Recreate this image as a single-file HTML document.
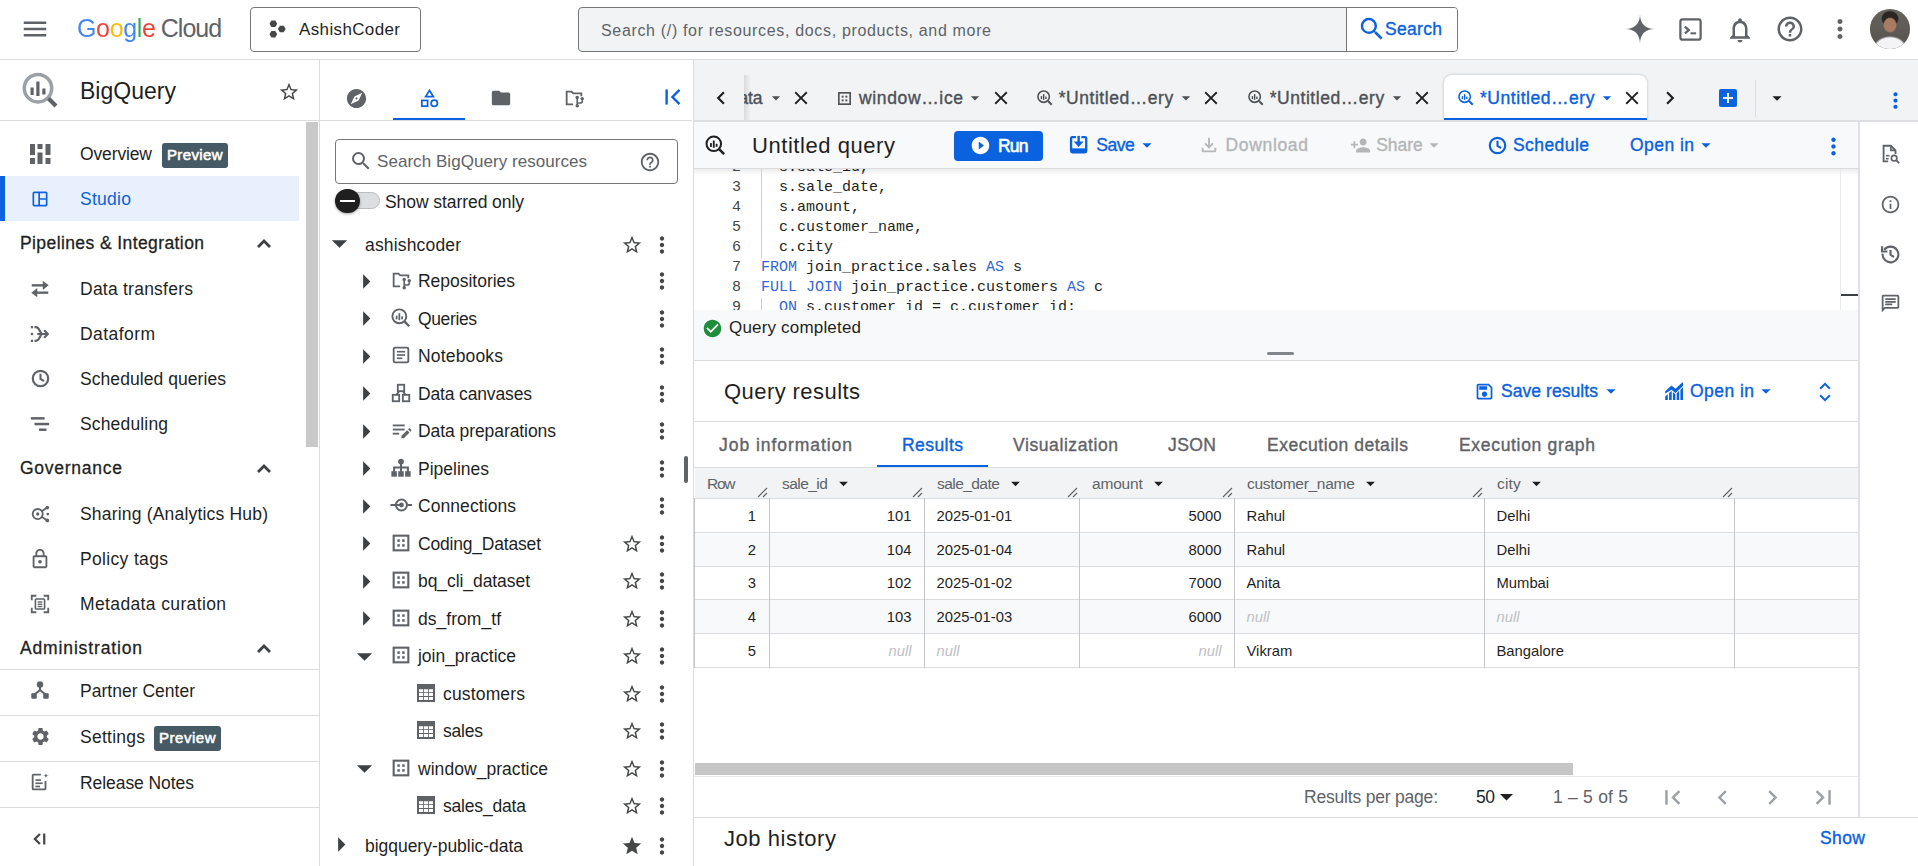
<!DOCTYPE html>
<html lang="en"><head><meta charset="utf-8"><title>BigQuery – Google Cloud console</title>
<style>
html,body{margin:0;padding:0;}
body{width:1918px;height:866px;overflow:hidden;position:relative;background:#fff;font-family:"Liberation Sans",sans-serif;}
.t{position:absolute;white-space:pre;}
.b{position:absolute;}
.i{position:absolute;overflow:visible;}
.c{position:absolute;white-space:pre;font-family:"Liberation Mono",monospace;font-size:15px;line-height:20px;color:#1f1f1f;}
.ln{left:0;width:47px;text-align:right;color:#444746;}
</style></head>
<body>
<div class="b" style="left:0px;top:0px;width:1918px;height:59px;background:#fff;"></div>
<div class="b" style="left:0px;top:59px;width:1918px;height:1px;background:#dadce0;"></div>
<svg class="i" style="left:20.00px;top:14.00px;color:#5f6368;" width="30" height="30" viewBox="0 0 24 24" fill="#5f6368"><path d="M3 18h18v-2H3v2zm0-5h18v-2H3v2zm0-7v2h18V6H3z"/></svg>
<span class="t" style="left:77px;top:13px;font-size:25px;line-height:30px;letter-spacing:-0.35px;font-family:'Liberation Sans',sans-serif;color:transparent;background:linear-gradient(90deg,#4285f4 0.00px 19.10px,#ea4335 19.10px 32.65px,#fbbc04 32.65px 46.20px,#4285f4 46.20px 59.76px,#34a853 59.76px 64.96px,#ea4335 64.96px 78.52px);-webkit-background-clip:text;background-clip:text;padding-right:2px;">Google</span>
<span class="t" style="left:160.70px;top:12.29px;font-size:25px;line-height:32px;color:#5f6368;font-family:'Liberation Sans',sans-serif;letter-spacing:-0.956px;">Cloud</span>
<div class="b" style="left:250px;top:7px;width:171px;height:45px;background:#fff;border:1px solid #747775;border-radius:4px;box-sizing:border-box;"></div>
<svg class="i" style="left:266.00px;top:18.00px;color:#444746;" width="22" height="22" viewBox="0 0 24 24" fill="#444746"><path d="M12.20 6.30L10.10 9.94L5.90 9.94L3.80 6.30L5.90 2.66L10.10 2.66zM21.40 12.00L19.30 15.64L15.10 15.64L13.00 12.00L15.10 8.36L19.30 8.36zM12.20 17.70L10.10 21.34L5.90 21.34L3.80 17.70L5.90 14.06L10.10 14.06z"/></svg>
<span class="t" style="left:299.00px;top:19.20px;font-size:17px;line-height:22px;color:#1f1f1f;font-family:'Liberation Sans',sans-serif;letter-spacing:0.367px;">AshishCoder</span>
<div class="b" style="left:578px;top:7px;width:880px;height:45px;background:#f1f3f4;border:1px solid #747775;border-radius:4px;box-sizing:border-box;"></div>
<div class="b" style="left:1346px;top:8px;width:110px;height:43px;background:#fff;border-left:1px solid #747775;border-radius:0 3px 3px 0;"></div>
<span class="t" style="left:601.00px;top:19.68px;font-size:16px;line-height:21px;color:#5f6368;font-family:'Liberation Sans',sans-serif;letter-spacing:0.664px;">Search (/) for resources, docs, products, and more</span>
<svg class="i" style="left:1356.50px;top:13.50px;color:#0b62de;" width="30" height="30" viewBox="0 0 24 24" fill="#0b62de"><path d="M15.5 14h-.79l-.28-.27A6.471 6.471 0 0 0 16 9.5 6.5 6.5 0 1 0 9.5 16c1.61 0 3.09-.59 4.23-1.57l.27.28v.79l5 4.99L20.49 19l-4.99-5zm-6 0C7.01 14 5 11.99 5 9.5S7.01 5 9.5 5 14 7.01 14 9.5 11.99 14 9.5 14z"/></svg>
<span class="t" style="left:1385.00px;top:17.70px;font-size:17.5px;line-height:23px;color:#0b62de;font-family:'Liberation Sans',sans-serif;-webkit-text-stroke:0.38px #0b62de;letter-spacing:0.311px;">Search</span>
<svg class="i" style="left:1624.00px;top:13.00px;color:#5f6368;" width="32" height="32" viewBox="0 0 24 24" fill="#5f6368"><path d="M12 1C12 8 16 12 23 12 16 12 12 16 12 23 12 16 8 12 1 12 8 12 12 8 12 1z"/></svg>
<svg class="i" style="left:1676.50px;top:15.50px;color:#5f6368;" width="27" height="27" viewBox="0 0 24 24" fill="#5f6368"><rect x="3" y="3" width="18" height="18" rx="2" fill="none" stroke="currentColor" stroke-width="2"/><path d="M7 9.500l3.500 3-3.500 3" stroke="currentColor" stroke-width="2" fill="none"/><rect x="12" y="14.500" width="5" height="1.800"/></svg>
<svg class="i" style="left:1725.00px;top:14.50px;color:#5f6368;" width="30" height="30" viewBox="0 0 24 24" fill="#5f6368"><path d="M12 22c1.1 0 2-.9 2-2h-4c0 1.1.9 2 2 2zm6-6v-5c0-3.07-1.63-5.64-4.5-6.32V4c0-.83-.67-1.5-1.5-1.5s-1.5.67-1.5 1.5v.68C7.64 5.36 6 7.92 6 11v5l-2 2v1h16v-1l-2-2zm-2 1H8v-6c0-2.48 1.51-4.5 4-4.5s4 2.02 4 4.5v6z"/></svg>
<svg class="i" style="left:1775.00px;top:14.00px;color:#5f6368;" width="30" height="30" viewBox="0 0 24 24" fill="#5f6368"><path d="M11 18h2v-2h-2v2zm1-16C6.48 2 2 6.48 2 12s4.48 10 10 10 10-4.48 10-10S17.52 2 12 2zm0 18c-4.41 0-8-3.59-8-8s3.59-8 8-8 8 3.59 8 8-3.59 8-8 8zm0-14c-2.21 0-4 1.79-4 4h2c0-1.1.9-2 2-2s2 .9 2 2c0 2-3 1.75-3 5h2c0-2.25 3-2.5 3-5 0-2.21-1.79-4-4-4z"/></svg>
<svg class="i" style="left:1825.00px;top:14.00px;color:#5f6368;" width="30" height="30" viewBox="0 0 24 24" fill="#5f6368"><path d="M12 8c1.1 0 2-.9 2-2s-.9-2-2-2-2 .9-2 2 .9 2 2 2zm0 2c-1.1 0-2 .9-2 2s.9 2 2 2 2-.9 2-2-.9-2-2-2zm0 6c-1.1 0-2 .9-2 2s.9 2 2 2 2-.9 2-2-.9-2-2-2z"/></svg>
<div class="b" style="left:1870px;top:9px;width:40px;height:40px;border-radius:50%;overflow:hidden;background:#d9d5d0;"><div class="b" style="left:0;top:0;width:40px;height:40px;background:radial-gradient(ellipse 7px 8px at 50% 40%, #a87c63 0 80%, rgba(0,0,0,0) 100%),radial-gradient(ellipse 9px 8px at 50% 24%, #2a2523 0 85%, rgba(0,0,0,0) 100%),radial-gradient(ellipse 17px 13px at 50% 100%, #f4f4f6 0 85%, rgba(0,0,0,0) 100%),linear-gradient(#67645f,#55524e);"></div></div>
<div class="b" style="left:0px;top:60px;width:319px;height:806px;background:#fff;"></div>
<div class="b" style="left:319px;top:60px;width:1px;height:806px;background:#dadce0;"></div>
<svg class="i" style="left:20.00px;top:70.00px;" width="40" height="40" viewBox="0 0 40 40" fill="#5f6368"><circle cx="18" cy="18.200" r="13.700" fill="none" stroke="#9aa0a6" stroke-width="3.500"/><path d="M28.500 28.500L36 36" stroke="#5f6368" stroke-width="4.200" fill="none"/><rect x="10.500" y="17.500" width="3.200" height="7.500" fill="#5f6368"/><rect x="16.300" y="11.500" width="3.200" height="14.500" fill="#5f6368"/><rect x="22.300" y="18.500" width="3.200" height="6" fill="#5f6368"/></svg>
<span class="t" style="left:80.00px;top:76.06px;font-size:23px;line-height:30px;color:#1f1f1f;font-family:'Liberation Sans',sans-serif;letter-spacing:0.018px;">BigQuery</span>
<svg class="i" style="left:278.00px;top:81.00px;color:#444746;" width="22" height="22" viewBox="0 0 24 24" fill="#444746"><path d="M22 9.24l-7.19-.62L12 2 9.19 8.63 2 9.24l5.46 4.73L5.82 21 12 17.27 18.18 21l-1.63-7.03L22 9.24zM12 15.4l-3.76 2.27 1-4.28-3.32-2.88 4.38-.38L12 6.1l1.71 4.04 4.38.38-3.32 2.88 1 4.28L12 15.4z"/></svg>
<div class="b" style="left:0px;top:120px;width:319px;height:1px;background:#dadce0;"></div>
<div class="b" style="left:306px;top:122px;width:12px;height:325px;background:#c9c9c9;"></div>
<svg class="i" style="left:28.00px;top:141.50px;color:#5f6368;" width="24" height="24" viewBox="0 0 24 24" fill="#5f6368"><rect x="2" y="2" width="5" height="11"/><rect x="2" y="16" width="5" height="6"/><rect x="9.500" y="2" width="5" height="5"/><rect x="9.500" y="10.500" width="5" height="11.500"/><rect x="17.500" y="2" width="5" height="11"/><rect x="17.500" y="16" width="5" height="6"/></svg>
<span class="t" style="left:80.00px;top:142.70px;font-size:17.5px;line-height:23px;color:#1f1f1f;font-family:'Liberation Sans',sans-serif;letter-spacing:-0.133px;">Overview</span>
<div class="b" style="left:162px;top:143.0px;width:66px;height:24.5px;background:#455a64;border-radius:3px;"></div>
<span class="t" style="left:167.00px;top:144.77px;font-size:15px;line-height:20px;color:#fff;font-family:'Liberation Sans',sans-serif;-webkit-text-stroke:0.38px #fff;letter-spacing:0.358px;-webkit-text-stroke:0.550px #fff;">Preview</span>
<div class="b" style="left:0px;top:176px;width:299px;height:45px;background:#e8f0fe;"></div>
<div class="b" style="left:0px;top:176px;width:5px;height:45px;background:#0b62de;"></div>
<svg class="i" style="left:30.00px;top:188.50px;color:#0b62de;" width="20" height="20" viewBox="0 0 24 24" fill="#0b62de"><rect x="4" y="4" width="16" height="16" rx="1" fill="none" stroke="currentColor" stroke-width="2"/><path d="M11 4v16M11 12h9" stroke="currentColor" stroke-width="2" fill="none"/></svg>
<span class="t" style="left:80.00px;top:187.70px;font-size:17.5px;line-height:23px;color:#0b62de;font-family:'Liberation Sans',sans-serif;letter-spacing:0.276px;">Studio</span>
<span class="t" style="left:20.00px;top:232.20px;font-size:17.5px;line-height:23px;color:#1f1f1f;font-family:'Liberation Sans',sans-serif;letter-spacing:0.404px;-webkit-text-stroke:0.300px #1f1f1f;">Pipelines &amp; Integration</span>
<svg class="i" style="left:252.00px;top:232.00px;color:#3c4043;" width="24" height="24" viewBox="0 0 24 24" fill="#3c4043"><path d="M6 15l6-6 6 6" stroke="currentColor" stroke-width="2.800" fill="none"/></svg>
<svg class="i" style="left:29.00px;top:277.50px;color:#5f6368;" width="22" height="22" viewBox="0 0 24 24" fill="#5f6368"><path d="M3 8h13" stroke="currentColor" stroke-width="2.600" fill="none"/><path d="M15 3l6.500 5-6.500 5z"/><path d="M21 16H8" stroke="currentColor" stroke-width="2.600" fill="none"/><path d="M9 11l-6.500 5 6.500 5z"/></svg>
<span class="t" style="left:80.00px;top:277.70px;font-size:17.5px;line-height:23px;color:#1f1f1f;font-family:'Liberation Sans',sans-serif;letter-spacing:0.238px;">Data transfers</span>
<svg class="i" style="left:29.00px;top:322.50px;color:#5f6368;" width="22" height="22" viewBox="0 0 24 24" fill="#5f6368"><path d="M9 12h11.500M16.500 8l4 4-4 4" stroke="currentColor" stroke-width="2.400" fill="none"/><path d="M6 4.500h1.500c4.500 0 4 7.500 7.500 7.500M6 19.500h1.500c4.500 0 4-7.500 7.500-7.500" stroke="currentColor" stroke-width="2.400" fill="none"/><rect x="2" y="3.300" width="2.500" height="2.500"/><rect x="2" y="10.750" width="2.500" height="2.500"/><rect x="2" y="18.200" width="2.500" height="2.500"/></svg>
<span class="t" style="left:80.00px;top:322.70px;font-size:17.5px;line-height:23px;color:#1f1f1f;font-family:'Liberation Sans',sans-serif;letter-spacing:0.434px;">Dataform</span>
<svg class="i" style="left:29.50px;top:368.00px;color:#5f6368;" width="21" height="21" viewBox="0 0 24 24" fill="#5f6368"><circle cx="12" cy="12" r="8.800" fill="none" stroke="currentColor" stroke-width="2.500"/><path d="M12 6.500v6l4 2.500" stroke="currentColor" stroke-width="2.400" fill="none"/></svg>
<span class="t" style="left:80.00px;top:367.70px;font-size:17.5px;line-height:23px;color:#1f1f1f;font-family:'Liberation Sans',sans-serif;letter-spacing:0.065px;">Scheduled queries</span>
<svg class="i" style="left:29.00px;top:412.50px;color:#5f6368;" width="22" height="22" viewBox="0 0 24 24" fill="#5f6368"><rect x="2" y="4.500" width="15" height="2.700"/><rect x="6" y="10.700" width="16" height="2.700"/><rect x="11" y="16.900" width="8" height="2.700"/></svg>
<span class="t" style="left:80.00px;top:412.70px;font-size:17.5px;line-height:23px;color:#1f1f1f;font-family:'Liberation Sans',sans-serif;letter-spacing:0.156px;">Scheduling</span>
<span class="t" style="left:20.00px;top:457.20px;font-size:17.5px;line-height:23px;color:#1f1f1f;font-family:'Liberation Sans',sans-serif;letter-spacing:0.741px;-webkit-text-stroke:0.300px #1f1f1f;">Governance</span>
<svg class="i" style="left:252.00px;top:457.00px;color:#3c4043;" width="24" height="24" viewBox="0 0 24 24" fill="#3c4043"><path d="M6 15l6-6 6 6" stroke="currentColor" stroke-width="2.800" fill="none"/></svg>
<svg class="i" style="left:29.00px;top:502.50px;color:#5f6368;" width="22" height="22" viewBox="0 0 24 24" fill="#5f6368"><circle cx="9.500" cy="12" r="5.500" fill="none" stroke="currentColor" stroke-width="2"/><circle cx="9.500" cy="12" r="1.800"/><path d="M14 9l5-3.500M14 15l5 3.500" stroke="currentColor" stroke-width="2" fill="none"/><circle cx="20" cy="5" r="2"/><circle cx="20" cy="19" r="2"/><circle cx="20.500" cy="12" r="1.500"/></svg>
<span class="t" style="left:80.00px;top:502.70px;font-size:17.5px;line-height:23px;color:#1f1f1f;font-family:'Liberation Sans',sans-serif;letter-spacing:0.190px;">Sharing (Analytics Hub)</span>
<svg class="i" style="left:29.00px;top:547.50px;color:#5f6368;" width="22" height="22" viewBox="0 0 24 24" fill="#5f6368"><path d="M18 8h-1V6c0-2.76-2.24-5-5-5S7 3.24 7 6v2H6c-1.1 0-2 .9-2 2v10c0 1.1.9 2 2 2h12c1.1 0 2-.9 2-2V10c0-1.1-.9-2-2-2zM9 6c0-1.66 1.34-3 3-3s3 1.34 3 3v2H9V6zm9 14H6V10h12v10zm-6-3c1.1 0 2-.9 2-2s-.9-2-2-2-2 .9-2 2 .9 2 2 2z"/></svg>
<span class="t" style="left:80.00px;top:547.70px;font-size:17.5px;line-height:23px;color:#1f1f1f;font-family:'Liberation Sans',sans-serif;letter-spacing:0.338px;">Policy tags</span>
<svg class="i" style="left:29.00px;top:592.50px;color:#5f6368;" width="22" height="22" viewBox="0 0 24 24" fill="#5f6368"><path d="M3 8V3h5M16 3h5v5M21 16v5h-5M8 21H3v-5" stroke="currentColor" stroke-width="2" fill="none"/><rect x="7" y="6.500" width="10" height="11" rx="1" fill="none" stroke="currentColor" stroke-width="1.800"/><rect x="9.500" y="9" width="5" height="1.500"/><rect x="9.500" y="11.500" width="5" height="1.500"/><rect x="9.500" y="14" width="5" height="1.500"/></svg>
<span class="t" style="left:80.00px;top:592.70px;font-size:17.5px;line-height:23px;color:#1f1f1f;font-family:'Liberation Sans',sans-serif;letter-spacing:0.370px;">Metadata curation</span>
<span class="t" style="left:20.00px;top:637.20px;font-size:17.5px;line-height:23px;color:#1f1f1f;font-family:'Liberation Sans',sans-serif;letter-spacing:0.855px;-webkit-text-stroke:0.300px #1f1f1f;">Administration</span>
<svg class="i" style="left:252.00px;top:637.00px;color:#3c4043;" width="24" height="24" viewBox="0 0 24 24" fill="#3c4043"><path d="M6 15l6-6 6 6" stroke="currentColor" stroke-width="2.800" fill="none"/></svg>
<div class="b" style="left:0px;top:669px;width:319px;height:1px;background:#dadce0;"></div>
<div class="b" style="left:0px;top:715px;width:319px;height:1px;background:#dadce0;"></div>
<div class="b" style="left:0px;top:761px;width:319px;height:1px;background:#dadce0;"></div>
<div class="b" style="left:0px;top:807px;width:319px;height:1px;background:#dadce0;"></div>
<svg class="i" style="left:29.00px;top:679.30px;color:#5f6368;" width="22" height="22" viewBox="0 0 24 24" fill="#5f6368"><circle cx="12" cy="6" r="3.500"/><rect x="2.500" y="15.500" width="6" height="6" rx="1"/><rect x="15.500" y="15.500" width="6" height="6" rx="1"/><path d="M12 8v4l-6 5M12 12l6 5" stroke="currentColor" stroke-width="2.200" fill="none"/></svg>
<span class="t" style="left:80.00px;top:679.50px;font-size:17.5px;line-height:23px;color:#1f1f1f;font-family:'Liberation Sans',sans-serif;letter-spacing:0.017px;">Partner Center</span>
<svg class="i" style="left:29.50px;top:726.00px;color:#5f6368;" width="21" height="21" viewBox="0 0 24 24" fill="#5f6368"><path d="M19.14 12.94c.04-.3.06-.61.06-.94 0-.32-.02-.64-.07-.94l2.03-1.58c.18-.14.23-.41.12-.61l-1.92-3.32c-.12-.22-.37-.29-.59-.22l-2.39.96c-.5-.38-1.03-.7-1.62-.94l-.36-2.54c-.04-.24-.24-.41-.48-.41h-3.84c-.24 0-.43.17-.47.41l-.36 2.54c-.59.24-1.13.57-1.62.94l-2.39-.96c-.22-.08-.47 0-.59.22L2.74 8.87c-.12.21-.08.47.12.61l2.03 1.58c-.05.3-.09.63-.09.94s.02.64.07.94l-2.03 1.58c-.18.14-.23.41-.12.61l1.92 3.32c.12.22.37.29.59.22l2.39-.96c.5.38 1.03.7 1.62.94l.36 2.54c.05.24.24.41.48.41h3.84c.24 0 .44-.17.47-.41l.36-2.54c.59-.24 1.13-.56 1.62-.94l2.39.96c.22.08.47 0 .59-.22l1.92-3.32c.12-.22.07-.47-.12-.61l-2.01-1.58zM12 15.6c-1.98 0-3.6-1.62-3.6-3.6s1.62-3.6 3.6-3.6 3.6 1.62 3.6 3.6-1.62 3.6-3.6 3.6z"/></svg>
<span class="t" style="left:80.00px;top:725.70px;font-size:17.5px;line-height:23px;color:#1f1f1f;font-family:'Liberation Sans',sans-serif;letter-spacing:0.253px;">Settings</span>
<div class="b" style="left:154px;top:726.0px;width:67px;height:24.5px;background:#455a64;border-radius:3px;"></div>
<span class="t" style="left:159.00px;top:727.77px;font-size:15px;line-height:20px;color:#fff;font-family:'Liberation Sans',sans-serif;-webkit-text-stroke:0.38px #fff;letter-spacing:0.525px;-webkit-text-stroke:0.550px #fff;">Preview</span>
<svg class="i" style="left:29.00px;top:771.30px;color:#5f6368;" width="22" height="22" viewBox="0 0 24 24" fill="#5f6368"><path d="M13 4H5a1 1 0 0 0-1 1v14a1 1 0 0 0 1 1h12a1 1 0 0 0 1-1v-8" stroke="currentColor" stroke-width="2" fill="none"/><rect x="7" y="9" width="6" height="1.800"/><rect x="7" y="12.500" width="8" height="1.800"/><rect x="7" y="16" width="5" height="1.800"/><path d="M18.500 1.500c0 2.500 1 3.500 3.500 3.500-2.500 0-3.500 1-3.500 3.500 0-2.500-1-3.500-3.500-3.500 2.500 0 3.500-1 3.500-3.500z"/></svg>
<span class="t" style="left:80.00px;top:771.50px;font-size:17.5px;line-height:23px;color:#1f1f1f;font-family:'Liberation Sans',sans-serif;letter-spacing:-0.065px;">Release Notes</span>
<svg class="i" style="left:27.50px;top:828.30px;color:#444746;" width="22" height="22" viewBox="0 0 24 24" fill="#444746"><path d="M13 6.500l-5.500 5.500 5.500 5.500" stroke="currentColor" stroke-width="2.500" fill="none"/><rect x="16.500" y="6" width="2.400" height="12"/></svg>
<div class="b" style="left:320px;top:60px;width:372px;height:806px;background:#fff;"></div>
<div class="b" style="left:693px;top:60px;width:1px;height:806px;background:#dadce0;"></div>
<svg class="i" style="left:344.50px;top:86.50px;color:#5f6368;" width="23" height="23" viewBox="0 0 24 24" fill="#5f6368"><path d="M12 10.9c-.61 0-1.1.49-1.1 1.1s.49 1.1 1.1 1.1c.61 0 1.1-.49 1.1-1.1s-.49-1.1-1.1-1.1zM12 2C6.48 2 2 6.48 2 12s4.48 10 10 10 10-4.48 10-10S17.52 2 12 2zm2.19 12.19L6 18l3.81-8.19L18 6l-3.81 8.19z"/></svg>
<svg class="i" style="left:417.50px;top:86.50px;color:#0b62de;" width="23" height="23" viewBox="0 0 24 24" fill="#0b62de"><path d="M12 3.500l4 6.500H8z" fill="none" stroke="currentColor" stroke-width="1.800"/><rect x="4" y="14" width="6" height="6" fill="none" stroke="currentColor" stroke-width="1.800"/><circle cx="17" cy="17" r="3.300" fill="none" stroke="currentColor" stroke-width="1.800"/></svg>
<svg class="i" style="left:490.00px;top:87.00px;color:#5f6368;" width="22" height="22" viewBox="0 0 24 24" fill="#5f6368"><path d="M10 4H4c-1.1 0-1.99.9-1.99 2L2 18c0 1.1.9 2 2 2h16c1.1 0 2-.9 2-2V8c0-1.1-.9-2-2-2h-8l-2-2z"/></svg>
<svg class="i" style="left:563.00px;top:87.00px;color:#5f6368;" width="22" height="22" viewBox="0 0 24 24" fill="#5f6368"><path d="M11 19H4V5h5.2l2 2H20v3" fill="none" stroke="currentColor" stroke-width="2"/><path d="M15.5 11v10M15.5 17.5h3.2c1.3 0 2.3-1 2.3-2.3V14.5" fill="none" stroke="currentColor" stroke-width="1.8"/><circle cx="15.5" cy="11.5" r="1.9"/><circle cx="21" cy="12.8" r="1.9"/><circle cx="15.5" cy="20.5" r="1.9"/></svg>
<svg class="i" style="left:660.00px;top:84.00px;color:#0b62de;" width="26" height="26" viewBox="0 0 24 24" fill="#0b62de"><rect x="5" y="5" width="2.200" height="14"/><path d="M18 5.500L11.500 12l6.500 6.500" stroke="currentColor" stroke-width="2.200" fill="none"/></svg>
<div class="b" style="left:320px;top:120px;width:372px;height:1px;background:#dadce0;"></div>
<div class="b" style="left:393px;top:118px;width:72px;height:2px;background:#0b62de;"></div>
<div class="b" style="left:335px;top:139px;width:343px;height:45px;background:#fff;border:1px solid #747775;border-radius:4px;box-sizing:border-box;"></div>
<svg class="i" style="left:349.00px;top:149.00px;color:#5f6368;" width="24" height="24" viewBox="0 0 24 24" fill="#5f6368"><path d="M15.5 14h-.79l-.28-.27A6.471 6.471 0 0 0 16 9.5 6.5 6.5 0 1 0 9.5 16c1.61 0 3.09-.59 4.23-1.57l.27.28v.79l5 4.99L20.49 19l-4.99-5zm-6 0C7.01 14 5 11.99 5 9.5S7.01 5 9.5 5 14 7.01 14 9.5 11.99 14 9.5 14z"/></svg>
<span class="t" style="left:377.00px;top:151.20px;font-size:17px;line-height:22px;color:#5f6368;font-family:'Liberation Sans',sans-serif;letter-spacing:0.049px;">Search BigQuery resources</span>
<svg class="i" style="left:639.00px;top:151.00px;color:#5f6368;" width="22" height="22" viewBox="0 0 24 24" fill="#5f6368"><path d="M11 18h2v-2h-2v2zm1-16C6.48 2 2 6.48 2 12s4.48 10 10 10 10-4.48 10-10S17.52 2 12 2zm0 18c-4.41 0-8-3.59-8-8s3.59-8 8-8 8 3.59 8 8-3.59 8-8 8zm0-14c-2.21 0-4 1.79-4 4h2c0-1.1.9-2 2-2s2 .9 2 2c0 2-3 1.75-3 5h2c0-2.25 3-2.5 3-5 0-2.21-1.79-4-4-4z"/></svg>
<div class="b" style="left:347px;top:192px;width:33px;height:17px;background:#dddee2;border-radius:9px;border:1px solid #babdc2;box-sizing:border-box;"></div>
<div class="b" style="left:335px;top:188.7px;width:24.6px;height:24.6px;background:#1f1f1f;border-radius:50%;box-shadow:0 1px 3px rgba(0,0,0,.35);"></div>
<div class="b" style="left:339.5px;top:199.7px;width:15px;height:2.6px;background:#fff;"></div>
<span class="t" style="left:385.00px;top:190.70px;font-size:17.5px;line-height:23px;color:#1f1f1f;font-family:'Liberation Sans',sans-serif;letter-spacing:-0.067px;">Show starred only</span>
<svg class="i" style="left:328.30px;top:232.00px;color:#3c4043;" width="23" height="23" viewBox="0 0 24 24" fill="#3c4043"><path d="M4 8.500h16L12 16.500z"/></svg>
<span class="t" style="left:365.00px;top:234.20px;font-size:17.5px;line-height:23px;color:#1f1f1f;font-family:'Liberation Sans',sans-serif;letter-spacing:0.164px;">ashishcoder</span>
<svg class="i" style="left:621.00px;top:234.00px;color:#444746;" width="22" height="22" viewBox="0 0 24 24" fill="#444746"><path d="M22 9.24l-7.19-.62L12 2 9.19 8.63 2 9.24l5.46 4.73L5.82 21 12 17.27 18.18 21l-1.63-7.03L22 9.24zM12 15.4l-3.76 2.27 1-4.28-3.32-2.88 4.38-.38L12 6.1l1.71 4.04 4.38.38-3.32 2.88 1 4.28L12 15.4z"/></svg>
<svg class="i" style="left:649.00px;top:232.30px;color:#444746;" width="26" height="26" viewBox="0 0 24 24" fill="#444746"><path d="M12 8c1.1 0 2-.9 2-2s-.9-2-2-2-2 .9-2 2 .9 2 2 2zm0 2c-1.1 0-2 .9-2 2s.9 2 2 2 2-.9 2-2-.9-2-2-2zm0 6c-1.1 0-2 .9-2 2s.9 2 2 2 2-.9 2-2-.9-2-2-2z"/></svg>
<svg class="i" style="left:355.00px;top:269.80px;color:#3c4043;" width="23" height="23" viewBox="0 0 24 24" fill="#3c4043"><path d="M8.500 4.500L16 12l-7.500 7.500z"/></svg>
<svg class="i" style="left:390.00px;top:269.00px;color:#5f6368;" width="22" height="22" viewBox="0 0 24 24" fill="#5f6368"><path d="M11 19H4V5h5.2l2 2H20v3" fill="none" stroke="currentColor" stroke-width="2"/><path d="M15.5 11v10M15.5 17.5h3.2c1.3 0 2.3-1 2.3-2.3V14.5" fill="none" stroke="currentColor" stroke-width="1.8"/><circle cx="15.5" cy="11.5" r="1.9"/><circle cx="21" cy="12.8" r="1.9"/><circle cx="15.5" cy="20.5" r="1.9"/></svg>
<span class="t" style="left:418.00px;top:270.20px;font-size:17.5px;line-height:23px;color:#1f1f1f;font-family:'Liberation Sans',sans-serif;letter-spacing:-0.024px;">Repositories</span>
<svg class="i" style="left:649.00px;top:268.30px;color:#444746;" width="26" height="26" viewBox="0 0 24 24" fill="#444746"><path d="M12 8c1.1 0 2-.9 2-2s-.9-2-2-2-2 .9-2 2 .9 2 2 2zm0 2c-1.1 0-2 .9-2 2s.9 2 2 2 2-.9 2-2-.9-2-2-2zm0 6c-1.1 0-2 .9-2 2s.9 2 2 2 2-.9 2-2-.9-2-2-2z"/></svg>
<svg class="i" style="left:355.00px;top:307.30px;color:#3c4043;" width="23" height="23" viewBox="0 0 24 24" fill="#3c4043"><path d="M8.500 4.500L16 12l-7.500 7.500z"/></svg>
<svg class="i" style="left:390.00px;top:306.50px;color:#5f6368;" width="22" height="22" viewBox="0 0 24 24" fill="#5f6368"><circle cx="10.200" cy="10.200" r="7.600" fill="none" stroke="currentColor" stroke-width="2.100"/><path d="M16 16L21 21" stroke="currentColor" stroke-width="2.600" fill="none"/><rect x="6.300" y="9.500" width="1.900" height="4"/><rect x="9.250" y="6.800" width="1.900" height="7.600"/><rect x="12.200" y="10.200" width="1.900" height="3.200"/></svg>
<span class="t" style="left:418.00px;top:307.70px;font-size:17.5px;line-height:23px;color:#1f1f1f;font-family:'Liberation Sans',sans-serif;letter-spacing:-0.379px;">Queries</span>
<svg class="i" style="left:649.00px;top:305.80px;color:#444746;" width="26" height="26" viewBox="0 0 24 24" fill="#444746"><path d="M12 8c1.1 0 2-.9 2-2s-.9-2-2-2-2 .9-2 2 .9 2 2 2zm0 2c-1.1 0-2 .9-2 2s.9 2 2 2 2-.9 2-2-.9-2-2-2zm0 6c-1.1 0-2 .9-2 2s.9 2 2 2 2-.9 2-2-.9-2-2-2z"/></svg>
<svg class="i" style="left:355.00px;top:344.80px;color:#3c4043;" width="23" height="23" viewBox="0 0 24 24" fill="#3c4043"><path d="M8.500 4.500L16 12l-7.500 7.500z"/></svg>
<svg class="i" style="left:390.00px;top:344.00px;color:#5f6368;" width="22" height="22" viewBox="0 0 24 24" fill="#5f6368"><rect x="4" y="4" width="16" height="16" rx="1.5" fill="none" stroke="currentColor" stroke-width="2"/><rect x="7.5" y="7.5" width="9" height="1.8"/><rect x="7.5" y="11.1" width="9" height="1.8"/><rect x="7.5" y="14.7" width="6" height="1.8"/></svg>
<span class="t" style="left:418.00px;top:345.20px;font-size:17.5px;line-height:23px;color:#1f1f1f;font-family:'Liberation Sans',sans-serif;letter-spacing:0.167px;">Notebooks</span>
<svg class="i" style="left:649.00px;top:343.30px;color:#444746;" width="26" height="26" viewBox="0 0 24 24" fill="#444746"><path d="M12 8c1.1 0 2-.9 2-2s-.9-2-2-2-2 .9-2 2 .9 2 2 2zm0 2c-1.1 0-2 .9-2 2s.9 2 2 2 2-.9 2-2-.9-2-2-2zm0 6c-1.1 0-2 .9-2 2s.9 2 2 2 2-.9 2-2-.9-2-2-2z"/></svg>
<svg class="i" style="left:355.00px;top:382.30px;color:#3c4043;" width="23" height="23" viewBox="0 0 24 24" fill="#3c4043"><path d="M8.500 4.500L16 12l-7.500 7.500z"/></svg>
<svg class="i" style="left:390.00px;top:381.50px;color:#5f6368;" width="22" height="22" viewBox="0 0 24 24" fill="#5f6368"><rect x="8.5" y="3" width="7" height="7" fill="none" stroke="currentColor" stroke-width="2"/><rect x="3" y="14" width="7" height="7" fill="none" stroke="currentColor" stroke-width="2"/><rect x="14" y="14" width="7" height="7" fill="none" stroke="currentColor" stroke-width="2"/><path d="M10 10L7 14M14 10l3 4" stroke="currentColor" stroke-width="2" fill="none"/></svg>
<span class="t" style="left:418.00px;top:382.70px;font-size:17.5px;line-height:23px;color:#1f1f1f;font-family:'Liberation Sans',sans-serif;letter-spacing:-0.146px;">Data canvases</span>
<svg class="i" style="left:649.00px;top:380.80px;color:#444746;" width="26" height="26" viewBox="0 0 24 24" fill="#444746"><path d="M12 8c1.1 0 2-.9 2-2s-.9-2-2-2-2 .9-2 2 .9 2 2 2zm0 2c-1.1 0-2 .9-2 2s.9 2 2 2 2-.9 2-2-.9-2-2-2zm0 6c-1.1 0-2 .9-2 2s.9 2 2 2 2-.9 2-2-.9-2-2-2z"/></svg>
<svg class="i" style="left:355.00px;top:419.80px;color:#3c4043;" width="23" height="23" viewBox="0 0 24 24" fill="#3c4043"><path d="M8.500 4.500L16 12l-7.500 7.500z"/></svg>
<svg class="i" style="left:390.00px;top:419.00px;color:#5f6368;" width="22" height="22" viewBox="0 0 24 24" fill="#5f6368"><rect x="3" y="6" width="13" height="2"/><rect x="3" y="10.5" width="13" height="2"/><rect x="3" y="15" width="7" height="2"/><path d="M12.5 21v-2.6l6.2-6.2 2.6 2.6-6.2 6.2z M19.6 11.3l1-1c.3-.3.8-.3 1.1 0l1.5 1.500c.3.3.3.8 0 1.1l-1 1z"/></svg>
<span class="t" style="left:418.00px;top:420.20px;font-size:17.5px;line-height:23px;color:#1f1f1f;font-family:'Liberation Sans',sans-serif;letter-spacing:-0.069px;">Data preparations</span>
<svg class="i" style="left:649.00px;top:418.30px;color:#444746;" width="26" height="26" viewBox="0 0 24 24" fill="#444746"><path d="M12 8c1.1 0 2-.9 2-2s-.9-2-2-2-2 .9-2 2 .9 2 2 2zm0 2c-1.1 0-2 .9-2 2s.9 2 2 2 2-.9 2-2-.9-2-2-2zm0 6c-1.1 0-2 .9-2 2s.9 2 2 2 2-.9 2-2-.9-2-2-2z"/></svg>
<svg class="i" style="left:355.00px;top:457.30px;color:#3c4043;" width="23" height="23" viewBox="0 0 24 24" fill="#3c4043"><path d="M8.500 4.500L16 12l-7.500 7.500z"/></svg>
<svg class="i" style="left:390.00px;top:456.50px;color:#5f6368;" width="22" height="22" viewBox="0 0 24 24" fill="#5f6368"><circle cx="12" cy="5" r="3.200"/><rect x="1.500" y="15.500" width="6" height="6"/><rect x="9" y="15.500" width="6" height="6"/><rect x="16.500" y="15.500" width="6" height="6"/><path d="M12 7v9M4.500 16v-4.500h15V16" stroke="currentColor" stroke-width="2.200" fill="none"/></svg>
<span class="t" style="left:418.00px;top:457.70px;font-size:17.5px;line-height:23px;color:#1f1f1f;font-family:'Liberation Sans',sans-serif;">Pipelines</span>
<svg class="i" style="left:649.00px;top:455.80px;color:#444746;" width="26" height="26" viewBox="0 0 24 24" fill="#444746"><path d="M12 8c1.1 0 2-.9 2-2s-.9-2-2-2-2 .9-2 2 .9 2 2 2zm0 2c-1.1 0-2 .9-2 2s.9 2 2 2 2-.9 2-2-.9-2-2-2zm0 6c-1.1 0-2 .9-2 2s.9 2 2 2 2-.9 2-2-.9-2-2-2z"/></svg>
<svg class="i" style="left:355.00px;top:494.80px;color:#3c4043;" width="23" height="23" viewBox="0 0 24 24" fill="#3c4043"><path d="M8.500 4.500L16 12l-7.500 7.500z"/></svg>
<svg class="i" style="left:390.00px;top:494.00px;color:#5f6368;" width="22" height="22" viewBox="0 0 24 24" fill="#5f6368"><circle cx="12.500" cy="12" r="6" fill="none" stroke="currentColor" stroke-width="2.200"/><circle cx="12.500" cy="12" r="2.600"/><path d="M0.500 12h11M19 12h5" stroke="currentColor" stroke-width="2.200" fill="none"/></svg>
<span class="t" style="left:418.00px;top:495.20px;font-size:17.5px;line-height:23px;color:#1f1f1f;font-family:'Liberation Sans',sans-serif;letter-spacing:0.072px;">Connections</span>
<svg class="i" style="left:649.00px;top:493.30px;color:#444746;" width="26" height="26" viewBox="0 0 24 24" fill="#444746"><path d="M12 8c1.1 0 2-.9 2-2s-.9-2-2-2-2 .9-2 2 .9 2 2 2zm0 2c-1.1 0-2 .9-2 2s.9 2 2 2 2-.9 2-2-.9-2-2-2zm0 6c-1.1 0-2 .9-2 2s.9 2 2 2 2-.9 2-2-.9-2-2-2z"/></svg>
<svg class="i" style="left:355.00px;top:532.30px;color:#3c4043;" width="23" height="23" viewBox="0 0 24 24" fill="#3c4043"><path d="M8.500 4.500L16 12l-7.500 7.500z"/></svg>
<svg class="i" style="left:390.00px;top:531.50px;color:#5f6368;" width="22" height="22" viewBox="0 0 24 24" fill="#5f6368"><rect x="4" y="4" width="16" height="16" fill="none" stroke="currentColor" stroke-width="2.300"/><rect x="8" y="8" width="2.700" height="2.700"/><rect x="13.300" y="8" width="2.700" height="2.700"/><rect x="8" y="13.300" width="2.700" height="2.700"/><rect x="13.300" y="13.300" width="2.700" height="2.700"/></svg>
<span class="t" style="left:418.00px;top:532.70px;font-size:17.5px;line-height:23px;color:#1f1f1f;font-family:'Liberation Sans',sans-serif;letter-spacing:-0.192px;">Coding_Dataset</span>
<svg class="i" style="left:621.00px;top:532.50px;color:#444746;" width="22" height="22" viewBox="0 0 24 24" fill="#444746"><path d="M22 9.24l-7.19-.62L12 2 9.19 8.63 2 9.24l5.46 4.73L5.82 21 12 17.27 18.18 21l-1.63-7.03L22 9.24zM12 15.4l-3.76 2.27 1-4.28-3.32-2.88 4.38-.38L12 6.1l1.71 4.04 4.38.38-3.32 2.88 1 4.28L12 15.4z"/></svg>
<svg class="i" style="left:649.00px;top:530.80px;color:#444746;" width="26" height="26" viewBox="0 0 24 24" fill="#444746"><path d="M12 8c1.1 0 2-.9 2-2s-.9-2-2-2-2 .9-2 2 .9 2 2 2zm0 2c-1.1 0-2 .9-2 2s.9 2 2 2 2-.9 2-2-.9-2-2-2zm0 6c-1.1 0-2 .9-2 2s.9 2 2 2 2-.9 2-2-.9-2-2-2z"/></svg>
<svg class="i" style="left:355.00px;top:569.80px;color:#3c4043;" width="23" height="23" viewBox="0 0 24 24" fill="#3c4043"><path d="M8.500 4.500L16 12l-7.500 7.500z"/></svg>
<svg class="i" style="left:390.00px;top:569.00px;color:#5f6368;" width="22" height="22" viewBox="0 0 24 24" fill="#5f6368"><rect x="4" y="4" width="16" height="16" fill="none" stroke="currentColor" stroke-width="2.300"/><rect x="8" y="8" width="2.700" height="2.700"/><rect x="13.300" y="8" width="2.700" height="2.700"/><rect x="8" y="13.300" width="2.700" height="2.700"/><rect x="13.300" y="13.300" width="2.700" height="2.700"/></svg>
<span class="t" style="left:418.00px;top:570.20px;font-size:17.5px;line-height:23px;color:#1f1f1f;font-family:'Liberation Sans',sans-serif;letter-spacing:-0.066px;">bq_cli_dataset</span>
<svg class="i" style="left:621.00px;top:570.00px;color:#444746;" width="22" height="22" viewBox="0 0 24 24" fill="#444746"><path d="M22 9.24l-7.19-.62L12 2 9.19 8.63 2 9.24l5.46 4.73L5.82 21 12 17.27 18.18 21l-1.63-7.03L22 9.24zM12 15.4l-3.76 2.27 1-4.28-3.32-2.88 4.38-.38L12 6.1l1.71 4.04 4.38.38-3.32 2.88 1 4.28L12 15.4z"/></svg>
<svg class="i" style="left:649.00px;top:568.30px;color:#444746;" width="26" height="26" viewBox="0 0 24 24" fill="#444746"><path d="M12 8c1.1 0 2-.9 2-2s-.9-2-2-2-2 .9-2 2 .9 2 2 2zm0 2c-1.1 0-2 .9-2 2s.9 2 2 2 2-.9 2-2-.9-2-2-2zm0 6c-1.1 0-2 .9-2 2s.9 2 2 2 2-.9 2-2-.9-2-2-2z"/></svg>
<svg class="i" style="left:355.00px;top:607.30px;color:#3c4043;" width="23" height="23" viewBox="0 0 24 24" fill="#3c4043"><path d="M8.500 4.500L16 12l-7.500 7.500z"/></svg>
<svg class="i" style="left:390.00px;top:606.50px;color:#5f6368;" width="22" height="22" viewBox="0 0 24 24" fill="#5f6368"><rect x="4" y="4" width="16" height="16" fill="none" stroke="currentColor" stroke-width="2.300"/><rect x="8" y="8" width="2.700" height="2.700"/><rect x="13.300" y="8" width="2.700" height="2.700"/><rect x="8" y="13.300" width="2.700" height="2.700"/><rect x="13.300" y="13.300" width="2.700" height="2.700"/></svg>
<span class="t" style="left:418.00px;top:607.70px;font-size:17.5px;line-height:23px;color:#1f1f1f;font-family:'Liberation Sans',sans-serif;letter-spacing:0.037px;">ds_from_tf</span>
<svg class="i" style="left:621.00px;top:607.50px;color:#444746;" width="22" height="22" viewBox="0 0 24 24" fill="#444746"><path d="M22 9.24l-7.19-.62L12 2 9.19 8.63 2 9.24l5.46 4.73L5.82 21 12 17.27 18.18 21l-1.63-7.03L22 9.24zM12 15.4l-3.76 2.27 1-4.28-3.32-2.88 4.38-.38L12 6.1l1.71 4.04 4.38.38-3.32 2.88 1 4.28L12 15.4z"/></svg>
<svg class="i" style="left:649.00px;top:605.80px;color:#444746;" width="26" height="26" viewBox="0 0 24 24" fill="#444746"><path d="M12 8c1.1 0 2-.9 2-2s-.9-2-2-2-2 .9-2 2 .9 2 2 2zm0 2c-1.1 0-2 .9-2 2s.9 2 2 2 2-.9 2-2-.9-2-2-2zm0 6c-1.1 0-2 .9-2 2s.9 2 2 2 2-.9 2-2-.9-2-2-2z"/></svg>
<svg class="i" style="left:353.30px;top:644.80px;color:#3c4043;" width="23" height="23" viewBox="0 0 24 24" fill="#3c4043"><path d="M4 8.500h16L12 16.500z"/></svg>
<svg class="i" style="left:390.00px;top:644.00px;color:#5f6368;" width="22" height="22" viewBox="0 0 24 24" fill="#5f6368"><rect x="4" y="4" width="16" height="16" fill="none" stroke="currentColor" stroke-width="2.300"/><rect x="8" y="8" width="2.700" height="2.700"/><rect x="13.300" y="8" width="2.700" height="2.700"/><rect x="8" y="13.300" width="2.700" height="2.700"/><rect x="13.300" y="13.300" width="2.700" height="2.700"/></svg>
<span class="t" style="left:418.00px;top:645.20px;font-size:17.5px;line-height:23px;color:#1f1f1f;font-family:'Liberation Sans',sans-serif;letter-spacing:-0.021px;">join_practice</span>
<svg class="i" style="left:621.00px;top:645.00px;color:#444746;" width="22" height="22" viewBox="0 0 24 24" fill="#444746"><path d="M22 9.24l-7.19-.62L12 2 9.19 8.63 2 9.24l5.46 4.73L5.82 21 12 17.27 18.18 21l-1.63-7.03L22 9.24zM12 15.4l-3.76 2.27 1-4.28-3.32-2.88 4.38-.38L12 6.1l1.71 4.04 4.38.38-3.32 2.88 1 4.28L12 15.4z"/></svg>
<svg class="i" style="left:649.00px;top:643.30px;color:#444746;" width="26" height="26" viewBox="0 0 24 24" fill="#444746"><path d="M12 8c1.1 0 2-.9 2-2s-.9-2-2-2-2 .9-2 2 .9 2 2 2zm0 2c-1.1 0-2 .9-2 2s.9 2 2 2 2-.9 2-2-.9-2-2-2zm0 6c-1.1 0-2 .9-2 2s.9 2 2 2 2-.9 2-2-.9-2-2-2z"/></svg>
<svg class="i" style="left:414.00px;top:680.50px;color:#5f6368;" width="24" height="24" viewBox="0 0 24 24" fill="#5f6368"><path d="M3 3h18v18H3z M5.00 8.20v3.0h4.13v-3.0z M9.93 8.20v3.0h4.13v-3.0z M14.86 8.20v3.0h4.13v-3.0z M5.00 12.10v3.0h4.13v-3.0z M9.93 12.10v3.0h4.13v-3.0z M14.86 12.10v3.0h4.13v-3.0z M5.00 16.00v3.0h4.13v-3.0z M9.93 16.00v3.0h4.13v-3.0z M14.86 16.00v3.0h4.13v-3.0z" fill-rule="evenodd"/></svg>
<span class="t" style="left:443.00px;top:682.70px;font-size:17.5px;line-height:23px;color:#1f1f1f;font-family:'Liberation Sans',sans-serif;letter-spacing:0.161px;">customers</span>
<svg class="i" style="left:621.00px;top:682.50px;color:#444746;" width="22" height="22" viewBox="0 0 24 24" fill="#444746"><path d="M22 9.24l-7.19-.62L12 2 9.19 8.63 2 9.24l5.46 4.73L5.82 21 12 17.27 18.18 21l-1.63-7.03L22 9.24zM12 15.4l-3.76 2.27 1-4.28-3.32-2.88 4.38-.38L12 6.1l1.71 4.04 4.38.38-3.32 2.88 1 4.28L12 15.4z"/></svg>
<svg class="i" style="left:649.00px;top:680.80px;color:#444746;" width="26" height="26" viewBox="0 0 24 24" fill="#444746"><path d="M12 8c1.1 0 2-.9 2-2s-.9-2-2-2-2 .9-2 2 .9 2 2 2zm0 2c-1.1 0-2 .9-2 2s.9 2 2 2 2-.9 2-2-.9-2-2-2zm0 6c-1.1 0-2 .9-2 2s.9 2 2 2 2-.9 2-2-.9-2-2-2z"/></svg>
<svg class="i" style="left:414.00px;top:718.00px;color:#5f6368;" width="24" height="24" viewBox="0 0 24 24" fill="#5f6368"><path d="M3 3h18v18H3z M5.00 8.20v3.0h4.13v-3.0z M9.93 8.20v3.0h4.13v-3.0z M14.86 8.20v3.0h4.13v-3.0z M5.00 12.10v3.0h4.13v-3.0z M9.93 12.10v3.0h4.13v-3.0z M14.86 12.10v3.0h4.13v-3.0z M5.00 16.00v3.0h4.13v-3.0z M9.93 16.00v3.0h4.13v-3.0z M14.86 16.00v3.0h4.13v-3.0z" fill-rule="evenodd"/></svg>
<span class="t" style="left:443.00px;top:720.20px;font-size:17.5px;line-height:23px;color:#1f1f1f;font-family:'Liberation Sans',sans-serif;letter-spacing:-0.213px;">sales</span>
<svg class="i" style="left:621.00px;top:720.00px;color:#444746;" width="22" height="22" viewBox="0 0 24 24" fill="#444746"><path d="M22 9.24l-7.19-.62L12 2 9.19 8.63 2 9.24l5.46 4.73L5.82 21 12 17.27 18.18 21l-1.63-7.03L22 9.24zM12 15.4l-3.76 2.27 1-4.28-3.32-2.88 4.38-.38L12 6.1l1.71 4.04 4.38.38-3.32 2.88 1 4.28L12 15.4z"/></svg>
<svg class="i" style="left:649.00px;top:718.30px;color:#444746;" width="26" height="26" viewBox="0 0 24 24" fill="#444746"><path d="M12 8c1.1 0 2-.9 2-2s-.9-2-2-2-2 .9-2 2 .9 2 2 2zm0 2c-1.1 0-2 .9-2 2s.9 2 2 2 2-.9 2-2-.9-2-2-2zm0 6c-1.1 0-2 .9-2 2s.9 2 2 2 2-.9 2-2-.9-2-2-2z"/></svg>
<svg class="i" style="left:353.30px;top:757.30px;color:#3c4043;" width="23" height="23" viewBox="0 0 24 24" fill="#3c4043"><path d="M4 8.500h16L12 16.500z"/></svg>
<svg class="i" style="left:390.00px;top:756.50px;color:#5f6368;" width="22" height="22" viewBox="0 0 24 24" fill="#5f6368"><rect x="4" y="4" width="16" height="16" fill="none" stroke="currentColor" stroke-width="2.300"/><rect x="8" y="8" width="2.700" height="2.700"/><rect x="13.300" y="8" width="2.700" height="2.700"/><rect x="8" y="13.300" width="2.700" height="2.700"/><rect x="13.300" y="13.300" width="2.700" height="2.700"/></svg>
<span class="t" style="left:418.00px;top:757.70px;font-size:17.5px;line-height:23px;color:#1f1f1f;font-family:'Liberation Sans',sans-serif;letter-spacing:0.045px;">window_practice</span>
<svg class="i" style="left:621.00px;top:757.50px;color:#444746;" width="22" height="22" viewBox="0 0 24 24" fill="#444746"><path d="M22 9.24l-7.19-.62L12 2 9.19 8.63 2 9.24l5.46 4.73L5.82 21 12 17.27 18.18 21l-1.63-7.03L22 9.24zM12 15.4l-3.76 2.27 1-4.28-3.32-2.88 4.38-.38L12 6.1l1.71 4.04 4.38.38-3.32 2.88 1 4.28L12 15.4z"/></svg>
<svg class="i" style="left:649.00px;top:755.80px;color:#444746;" width="26" height="26" viewBox="0 0 24 24" fill="#444746"><path d="M12 8c1.1 0 2-.9 2-2s-.9-2-2-2-2 .9-2 2 .9 2 2 2zm0 2c-1.1 0-2 .9-2 2s.9 2 2 2 2-.9 2-2-.9-2-2-2zm0 6c-1.1 0-2 .9-2 2s.9 2 2 2 2-.9 2-2-.9-2-2-2z"/></svg>
<svg class="i" style="left:414.00px;top:793.00px;color:#5f6368;" width="24" height="24" viewBox="0 0 24 24" fill="#5f6368"><path d="M3 3h18v18H3z M5.00 8.20v3.0h4.13v-3.0z M9.93 8.20v3.0h4.13v-3.0z M14.86 8.20v3.0h4.13v-3.0z M5.00 12.10v3.0h4.13v-3.0z M9.93 12.10v3.0h4.13v-3.0z M14.86 12.10v3.0h4.13v-3.0z M5.00 16.00v3.0h4.13v-3.0z M9.93 16.00v3.0h4.13v-3.0z M14.86 16.00v3.0h4.13v-3.0z" fill-rule="evenodd"/></svg>
<span class="t" style="left:443.00px;top:795.20px;font-size:17.5px;line-height:23px;color:#1f1f1f;font-family:'Liberation Sans',sans-serif;letter-spacing:-0.183px;">sales_data</span>
<svg class="i" style="left:621.00px;top:795.00px;color:#444746;" width="22" height="22" viewBox="0 0 24 24" fill="#444746"><path d="M22 9.24l-7.19-.62L12 2 9.19 8.63 2 9.24l5.46 4.73L5.82 21 12 17.27 18.18 21l-1.63-7.03L22 9.24zM12 15.4l-3.76 2.27 1-4.28-3.32-2.88 4.38-.38L12 6.1l1.71 4.04 4.38.38-3.32 2.88 1 4.28L12 15.4z"/></svg>
<svg class="i" style="left:649.00px;top:793.30px;color:#444746;" width="26" height="26" viewBox="0 0 24 24" fill="#444746"><path d="M12 8c1.1 0 2-.9 2-2s-.9-2-2-2-2 .9-2 2 .9 2 2 2zm0 2c-1.1 0-2 .9-2 2s.9 2 2 2 2-.9 2-2-.9-2-2-2zm0 6c-1.1 0-2 .9-2 2s.9 2 2 2 2-.9 2-2-.9-2-2-2z"/></svg>
<svg class="i" style="left:330.00px;top:833.00px;color:#3c4043;" width="23" height="23" viewBox="0 0 24 24" fill="#3c4043"><path d="M8.500 4.500L16 12l-7.500 7.500z"/></svg>
<span class="t" style="left:365.00px;top:835.20px;font-size:17.5px;line-height:23px;color:#1f1f1f;font-family:'Liberation Sans',sans-serif;letter-spacing:-0.030px;">bigquery-public-data</span>
<svg class="i" style="left:621.00px;top:835.00px;color:#444746;" width="22" height="22" viewBox="0 0 24 24" fill="#444746"><path d="M12 17.27L18.18 21l-1.64-7.03L22 9.24l-7.19-.61L12 2 9.19 8.63 2 9.24l5.46 4.73L5.82 21z"/></svg>
<svg class="i" style="left:649.00px;top:833.30px;color:#444746;" width="26" height="26" viewBox="0 0 24 24" fill="#444746"><path d="M12 8c1.1 0 2-.9 2-2s-.9-2-2-2-2 .9-2 2 .9 2 2 2zm0 2c-1.1 0-2 .9-2 2s.9 2 2 2 2-.9 2-2-.9-2-2-2zm0 6c-1.1 0-2 .9-2 2s.9 2 2 2 2-.9 2-2-.9-2-2-2z"/></svg>
<div class="b" style="left:684px;top:455.5px;width:3.5px;height:27px;background:#5f6368;border-radius:2px;"></div>
<div class="b" style="left:694px;top:60px;width:1224px;height:62px;background:#f1f3f4;"></div>
<div class="b" style="left:1444px;top:75px;width:203px;height:45px;background:#fff;border-radius:8px 8px 0 0;box-shadow:0 0 3px rgba(0,0,0,.25);"></div>
<div class="b" style="left:1444px;top:118px;width:203px;height:2.5px;background:#0b62de;"></div>
<div class="b" style="left:694px;top:120px;width:1224px;height:2px;background:#dcdee1;"></div>
<svg class="i" style="left:708.00px;top:85.00px;color:#1f1f1f;" width="26" height="26" viewBox="0 0 24 24" fill="#1f1f1f"><path d="M15.41 7.41L14 6l-6 6 6 6 1.41-1.41L10.83 12z"/></svg>
<div class="b" style="left:744px;top:75px;width:7px;height:45px;background:linear-gradient(90deg,rgba(0,0,0,.10),rgba(0,0,0,0));"></div>
<div class="b" style="left:744px;top:80px;width:30px;height:36px;overflow:hidden;">
<span class="t" style="left:-5.50px;top:6.70px;font-size:17.5px;line-height:23px;color:#4d5156;font-family:'Liberation Sans',sans-serif;-webkit-text-stroke:0.38px #4d5156;letter-spacing:-0.163px;">ata</span>
</div>
<svg class="i" style="left:766.00px;top:88.00px;color:#4d5156;" width="20" height="20" viewBox="0 0 24 24" fill="#4d5156"><path d="M7 10l5 5 5-5z"/></svg>
<svg class="i" style="left:790.00px;top:87.00px;color:#1f1f1f;" width="22" height="22" viewBox="0 0 24 24" fill="#1f1f1f"><path d="M19 6.41L17.59 5 12 10.59 6.41 5 5 6.41 10.59 12 5 17.59 6.41 19 12 13.41 17.59 19 19 17.59 13.41 12z"/></svg>
<svg class="i" style="left:835.50px;top:89.50px;color:#4d5156;" width="17" height="17" viewBox="0 0 24 24" fill="#4d5156"><rect x="4" y="4" width="16" height="16" fill="none" stroke="currentColor" stroke-width="2.300"/><rect x="8" y="8" width="2.700" height="2.700"/><rect x="13.300" y="8" width="2.700" height="2.700"/><rect x="8" y="13.300" width="2.700" height="2.700"/><rect x="13.300" y="13.300" width="2.700" height="2.700"/></svg>
<span class="t" style="left:859.00px;top:86.70px;font-size:17.5px;line-height:23px;color:#4d5156;font-family:'Liberation Sans',sans-serif;-webkit-text-stroke:0.38px #4d5156;letter-spacing:0.641px;">window…ice</span>
<svg class="i" style="left:965.00px;top:88.00px;color:#4d5156;" width="20" height="20" viewBox="0 0 24 24" fill="#4d5156"><path d="M7 10l5 5 5-5z"/></svg>
<svg class="i" style="left:990.00px;top:87.00px;color:#1f1f1f;" width="22" height="22" viewBox="0 0 24 24" fill="#1f1f1f"><path d="M19 6.41L17.59 5 12 10.59 6.41 5 5 6.41 10.59 12 5 17.59 6.41 19 12 13.41 17.59 19 19 17.59 13.41 12z"/></svg>
<svg class="i" style="left:1035.70px;top:89.00px;color:#4d5156;" width="18" height="18" viewBox="0 0 24 24" fill="#4d5156"><circle cx="10.200" cy="10.200" r="7.600" fill="none" stroke="currentColor" stroke-width="2.100"/><path d="M16 16L21 21" stroke="currentColor" stroke-width="2.600" fill="none"/><rect x="6.300" y="9.500" width="1.900" height="4"/><rect x="9.250" y="6.800" width="1.900" height="7.600"/><rect x="12.200" y="10.200" width="1.900" height="3.200"/></svg>
<span class="t" style="left:1058.70px;top:86.70px;font-size:17.5px;line-height:23px;color:#4d5156;font-family:'Liberation Sans',sans-serif;-webkit-text-stroke:0.38px #4d5156;letter-spacing:0.545px;">*Untitled…ery</span>
<svg class="i" style="left:1176.00px;top:88.00px;color:#4d5156;" width="20" height="20" viewBox="0 0 24 24" fill="#4d5156"><path d="M7 10l5 5 5-5z"/></svg>
<svg class="i" style="left:1200.00px;top:87.00px;color:#1f1f1f;" width="22" height="22" viewBox="0 0 24 24" fill="#1f1f1f"><path d="M19 6.41L17.59 5 12 10.59 6.41 5 5 6.41 10.59 12 5 17.59 6.41 19 12 13.41 17.59 19 19 17.59 13.41 12z"/></svg>
<svg class="i" style="left:1246.70px;top:89.00px;color:#4d5156;" width="18" height="18" viewBox="0 0 24 24" fill="#4d5156"><circle cx="10.200" cy="10.200" r="7.600" fill="none" stroke="currentColor" stroke-width="2.100"/><path d="M16 16L21 21" stroke="currentColor" stroke-width="2.600" fill="none"/><rect x="6.300" y="9.500" width="1.900" height="4"/><rect x="9.250" y="6.800" width="1.900" height="7.600"/><rect x="12.200" y="10.200" width="1.900" height="3.200"/></svg>
<span class="t" style="left:1269.70px;top:86.70px;font-size:17.5px;line-height:23px;color:#4d5156;font-family:'Liberation Sans',sans-serif;-webkit-text-stroke:0.38px #4d5156;letter-spacing:0.545px;">*Untitled…ery</span>
<svg class="i" style="left:1387.00px;top:88.00px;color:#4d5156;" width="20" height="20" viewBox="0 0 24 24" fill="#4d5156"><path d="M7 10l5 5 5-5z"/></svg>
<svg class="i" style="left:1411.00px;top:87.00px;color:#1f1f1f;" width="22" height="22" viewBox="0 0 24 24" fill="#1f1f1f"><path d="M19 6.41L17.59 5 12 10.59 6.41 5 5 6.41 10.59 12 5 17.59 6.41 19 12 13.41 17.59 19 19 17.59 13.41 12z"/></svg>
<svg class="i" style="left:1457.00px;top:89.00px;color:#0b62de;" width="18" height="18" viewBox="0 0 24 24" fill="#0b62de"><circle cx="10.200" cy="10.200" r="7.600" fill="none" stroke="currentColor" stroke-width="2.100"/><path d="M16 16L21 21" stroke="currentColor" stroke-width="2.600" fill="none"/><rect x="6.300" y="9.500" width="1.900" height="4"/><rect x="9.250" y="6.800" width="1.900" height="7.600"/><rect x="12.200" y="10.200" width="1.900" height="3.200"/></svg>
<span class="t" style="left:1480.00px;top:86.70px;font-size:17.5px;line-height:23px;color:#0b62de;font-family:'Liberation Sans',sans-serif;-webkit-text-stroke:0.38px #0b62de;letter-spacing:0.545px;">*Untitled…ery</span>
<svg class="i" style="left:1597.30px;top:88.00px;color:#0b62de;" width="20" height="20" viewBox="0 0 24 24" fill="#0b62de"><path d="M7 10l5 5 5-5z"/></svg>
<svg class="i" style="left:1621.30px;top:87.00px;color:#1f1f1f;" width="22" height="22" viewBox="0 0 24 24" fill="#1f1f1f"><path d="M19 6.41L17.59 5 12 10.59 6.41 5 5 6.41 10.59 12 5 17.59 6.41 19 12 13.41 17.59 19 19 17.59 13.41 12z"/></svg>
<svg class="i" style="left:1656.50px;top:85.00px;color:#1f1f1f;" width="26" height="26" viewBox="0 0 24 24" fill="#1f1f1f"><path d="M10 6L8.59 7.41 13.17 12l-4.58 4.59L10 18l6-6z"/></svg>
<svg class="i" style="left:1716.00px;top:86.00px;color:#0b62de;" width="24" height="24" viewBox="0 0 24 24" fill="#0b62de"><path d="M19 3H5c-1.11 0-2 .9-2 2v14c0 1.1.89 2 2 2h14c1.1 0 2-.9 2-2V5c0-1.1-.9-2-2-2zm-2 10h-4v4h-2v-4H7v-2h4V7h2v4h4v2z"/></svg>
<div class="b" style="left:1755px;top:80px;width:1px;height:37px;background:#dadce0;"></div>
<svg class="i" style="left:1766.00px;top:87.00px;color:#1f1f1f;" width="22" height="22" viewBox="0 0 24 24" fill="#1f1f1f"><path d="M7 10l5 5 5-5z"/></svg>
<svg class="i" style="left:1882.50px;top:88.00px;color:#0b62de;" width="25" height="25" viewBox="0 0 24 24" fill="#0b62de"><path d="M12 8c1.1 0 2-.9 2-2s-.9-2-2-2-2 .9-2 2 .9 2 2 2zm0 2c-1.1 0-2 .9-2 2s.9 2 2 2 2-.9 2-2-.9-2-2-2zm0 6c-1.1 0-2 .9-2 2s.9 2 2 2 2-.9 2-2-.9-2-2-2z"/></svg>
<div class="b" style="left:694px;top:122px;width:1165px;height:46px;background:#f8f9fa;"></div>
<div class="b" style="left:694px;top:168px;width:1165px;height:1px;background:#dadce0;"></div>
<svg class="i" style="left:703.50px;top:133.50px;color:#1f1f1f;" width="23" height="23" viewBox="0 0 24 24" fill="#1f1f1f"><circle cx="10.200" cy="10.200" r="7.600" fill="none" stroke="currentColor" stroke-width="2.100"/><path d="M16 16L21 21" stroke="currentColor" stroke-width="2.600" fill="none"/><rect x="6.300" y="9.500" width="1.900" height="4"/><rect x="9.250" y="6.800" width="1.900" height="7.600"/><rect x="12.200" y="10.200" width="1.900" height="3.200"/></svg>
<span class="t" style="left:752.00px;top:131.25px;font-size:22px;line-height:29px;color:#1f1f1f;font-family:'Liberation Sans',sans-serif;letter-spacing:0.558px;">Untitled query</span>
<div class="b" style="left:954px;top:131px;width:89px;height:30px;background:#0b62de;border-radius:4px;"></div>
<svg class="i" style="left:969.70px;top:134.80px;color:#fff;" width="21" height="21" viewBox="0 0 24 24" fill="#fff"><path d="M12 2C6.48 2 2 6.48 2 12s4.48 10 10 10 10-4.48 10-10S17.52 2 12 2zm-2 14.5v-9l6 4.5-6 4.5z"/></svg>
<span class="t" style="left:998.00px;top:134.70px;font-size:17.5px;line-height:23px;color:#fff;font-family:'Liberation Sans',sans-serif;letter-spacing:-0.802px;-webkit-text-stroke:0.600px #fff;">Run</span>
<svg class="i" style="left:1067.45px;top:133.05px;color:#0b62de;" width="23.3" height="23.3" viewBox="0 0 24 24" fill="#0b62de"><path d="M9.200 4.200H5.500a1.300 1.300 0 0 0-1.300 1.300v13a1.300 1.300 0 0 0 1.300 1.300h13a1.300 1.300 0 0 0 1.300-1.300v-13a1.300 1.300 0 0 0-1.300-1.300h-3.700" stroke="currentColor" stroke-width="2.400" fill="none"/><rect x="4.200" y="15.800" width="15.600" height="4.500"/><rect x="10.750" y="3" width="2.500" height="8"/><path d="M6.900 8.700h10.200L12 14.300z"/></svg>
<span class="t" style="left:1096.20px;top:134.20px;font-size:17.5px;line-height:23px;color:#0b62de;font-family:'Liberation Sans',sans-serif;-webkit-text-stroke:0.38px #0b62de;letter-spacing:-0.462px;">Save</span>
<svg class="i" style="left:1135.60px;top:134.00px;color:#0b62de;" width="22" height="22" viewBox="0 0 24 24" fill="#0b62de"><path d="M7 10l5 5 5-5z"/></svg>
<svg class="i" style="left:1198.00px;top:134.00px;color:#b4b6b8;" width="22" height="22" viewBox="0 0 24 24" fill="#b4b6b8"><path d="M12 16l-5-5 1.4-1.45 2.6 2.6V4h2v8.15l2.6-2.6L17 11zm-6 4q-.825 0-1.412-.587T4 18v-3h2v3h12v-3h2v3q0 .825-.587 1.413T18 20z"/></svg>
<span class="t" style="left:1225.50px;top:134.20px;font-size:17.5px;line-height:23px;color:#b4b6b8;font-family:'Liberation Sans',sans-serif;-webkit-text-stroke:0.38px #b4b6b8;letter-spacing:0.667px;">Download</span>
<svg class="i" style="left:1349.50px;top:134.50px;color:#b4b6b8;" width="21" height="21" viewBox="0 0 24 24" fill="#b4b6b8"><path d="M15 12c2.21 0 4-1.79 4-4s-1.79-4-4-4-4 1.79-4 4 1.79 4 4 4zm-9-2V7H4v3H1v2h3v3h2v-3h3v-2H6zm9 4c-2.67 0-8 1.34-8 4v2h16v-2c0-2.66-5.33-4-8-4z"/></svg>
<span class="t" style="left:1376.20px;top:134.20px;font-size:17.5px;line-height:23px;color:#b4b6b8;font-family:'Liberation Sans',sans-serif;-webkit-text-stroke:0.38px #b4b6b8;letter-spacing:-0.049px;">Share</span>
<svg class="i" style="left:1423.00px;top:134.00px;color:#b4b6b8;" width="22" height="22" viewBox="0 0 24 24" fill="#b4b6b8"><path d="M7 10l5 5 5-5z"/></svg>
<svg class="i" style="left:1486.50px;top:134.50px;color:#0b62de;" width="21" height="21" viewBox="0 0 24 24" fill="#0b62de"><circle cx="12" cy="12" r="8.800" fill="none" stroke="currentColor" stroke-width="2.500"/><path d="M12 6.500v6l4 2.500" stroke="currentColor" stroke-width="2.400" fill="none"/></svg>
<span class="t" style="left:1513.00px;top:134.20px;font-size:17.5px;line-height:23px;color:#0b62de;font-family:'Liberation Sans',sans-serif;-webkit-text-stroke:0.38px #0b62de;letter-spacing:0.432px;">Schedule</span>
<span class="t" style="left:1630.00px;top:134.20px;font-size:17.5px;line-height:23px;color:#0b62de;font-family:'Liberation Sans',sans-serif;-webkit-text-stroke:0.38px #0b62de;letter-spacing:0.451px;">Open in</span>
<svg class="i" style="left:1695.00px;top:134.00px;color:#0b62de;" width="22" height="22" viewBox="0 0 24 24" fill="#0b62de"><path d="M7 10l5 5 5-5z"/></svg>
<svg class="i" style="left:1819.50px;top:132.50px;color:#0b62de;" width="27" height="27" viewBox="0 0 24 24" fill="#0b62de"><path d="M12 8c1.1 0 2-.9 2-2s-.9-2-2-2-2 .9-2 2 .9 2 2 2zm0 2c-1.1 0-2 .9-2 2s.9 2 2 2 2-.9 2-2-.9-2-2-2zm0 6c-1.1 0-2 .9-2 2s.9 2 2 2 2-.9 2-2-.9-2-2-2z"/></svg>
<div class="b" style="left:694px;top:169px;width:1165px;height:141px;background:#fff;"></div>
<div class="b" style="left:694px;top:169px;width:1165px;height:6px;background:linear-gradient(rgba(0,0,0,.08),rgba(0,0,0,0));"></div>
<div class="b" style="left:1840px;top:169px;width:1px;height:142px;background:#e8eaed;"></div>
<div class="b" style="left:1841px;top:294.3px;width:17px;height:2px;background:#3c4043;"></div>
<div class="b" style="left:694px;top:169px;width:1146px;height:142px;overflow:hidden;">
<span class="c ln" style="top:-11.5px;">2</span>
<span class="c" style="left:67px;top:-11.5px;"><span style="color:#1f1f1f">  s.sale_id,</span></span>
<div class="b" style="left:67px;top:-11.5px;width:1px;height:20px;background:#d0d3d6;"></div>
<span class="c ln" style="top:8.5px;">3</span>
<span class="c" style="left:67px;top:8.5px;"><span style="color:#1f1f1f">  s.sale_date,</span></span>
<div class="b" style="left:67px;top:8.5px;width:1px;height:20px;background:#d0d3d6;"></div>
<span class="c ln" style="top:28.5px;">4</span>
<span class="c" style="left:67px;top:28.5px;"><span style="color:#1f1f1f">  s.amount,</span></span>
<div class="b" style="left:67px;top:28.5px;width:1px;height:20px;background:#d0d3d6;"></div>
<span class="c ln" style="top:48.5px;">5</span>
<span class="c" style="left:67px;top:48.5px;"><span style="color:#1f1f1f">  c.customer_name,</span></span>
<div class="b" style="left:67px;top:48.5px;width:1px;height:20px;background:#d0d3d6;"></div>
<span class="c ln" style="top:68.5px;">6</span>
<span class="c" style="left:67px;top:68.5px;"><span style="color:#1f1f1f">  c.city</span></span>
<div class="b" style="left:67px;top:68.5px;width:1px;height:20px;background:#d0d3d6;"></div>
<span class="c ln" style="top:88.5px;">7</span>
<span class="c" style="left:67px;top:88.5px;"><span style="color:#3367d6">FROM</span><span style="color:#1f1f1f"> join_practice.sales </span><span style="color:#3367d6">AS</span><span style="color:#1f1f1f"> s</span></span>
<span class="c ln" style="top:108.5px;">8</span>
<span class="c" style="left:67px;top:108.5px;"><span style="color:#3367d6">FULL JOIN</span><span style="color:#1f1f1f"> join_practice.customers </span><span style="color:#3367d6">AS</span><span style="color:#1f1f1f"> c</span></span>
<span class="c ln" style="top:128.5px;">9</span>
<span class="c" style="left:67px;top:128.5px;"><span style="color:#1f1f1f">  </span><span style="color:#3367d6">ON</span><span style="color:#1f1f1f"> s.customer_id = c.customer_id;</span></span>
<div class="b" style="left:67px;top:128.5px;width:1px;height:20px;background:#d0d3d6;"></div>
</div>
<div class="b" style="left:694px;top:310px;width:1165px;height:50px;background:#f8f9fa;"></div>
<svg class="i" style="left:701.50px;top:317.50px;color:#1e8e3e;" width="21" height="21" viewBox="0 0 24 24" fill="#1e8e3e"><path d="M12 2C6.48 2 2 6.48 2 12s4.48 10 10 10 10-4.48 10-10S17.52 2 12 2zm-2 15l-5-5 1.41-1.41L10 14.17l7.59-7.59L19 8l-9 9z"/></svg>
<span class="t" style="left:729.00px;top:317.10px;font-size:17px;line-height:22px;color:#1f1f1f;font-family:'Liberation Sans',sans-serif;letter-spacing:0.182px;">Query completed</span>
<div class="b" style="left:1267px;top:351.8px;width:27px;height:3.4px;background:#80868b;border-radius:2px;"></div>
<div class="b" style="left:694px;top:360px;width:1165px;height:1px;background:#dadce0;"></div>
<div class="b" style="left:694px;top:361px;width:1165px;height:457px;background:#fff;"></div>
<span class="t" style="left:724.00px;top:377.25px;font-size:22px;line-height:29px;color:#1f1f1f;font-family:'Liberation Sans',sans-serif;letter-spacing:0.431px;">Query results</span>
<svg class="i" style="left:1473.70px;top:380.50px;color:#0b62de;" width="21" height="21" viewBox="0 0 24 24" fill="#0b62de"><path d="M17 3H5c-1.11 0-2 .9-2 2v14c0 1.1.89 2 2 2h14c1.1 0 2-.9 2-2V7l-4-4zm2 16H5V5h11.17L19 7.83V19zm-7-7c-1.66 0-3 1.34-3 3s1.34 3 3 3 3-1.34 3-3-1.34-3-3-3zM6 6h9v4H6z"/></svg>
<span class="t" style="left:1501.00px;top:380.20px;font-size:17.5px;line-height:23px;color:#0b62de;font-family:'Liberation Sans',sans-serif;-webkit-text-stroke:0.38px #0b62de;letter-spacing:0.064px;">Save results</span>
<svg class="i" style="left:1599.70px;top:380.00px;color:#0b62de;" width="22" height="22" viewBox="0 0 24 24" fill="#0b62de"><path d="M7 10l5 5 5-5z"/></svg>
<svg class="i" style="left:1665.00px;top:382.00px;" width="18" height="18" viewBox="0 0 18 18" fill="#0b62de"><path d="M0.20 18.00L0.20 14.60L2.80 12.25L2.80 18.00zM4.10 18.00L4.10 11.07L6.50 8.90L6.70 9.07L6.70 18.00zM7.90 18.00L7.90 10.09L10.40 12.22L10.40 18.00zM11.70 18.00L11.70 11.16L14.20 8.80L14.20 18.00zM15.40 18.00L15.40 7.66L18.00 5.20L18.00 18.00z"/><path d="M0.2 11.6V9.2L6.5 3.5l4 3.3L17.4 0.300l0.600 0.600v3.100L10.500 11 6.500 7.700z"/></svg>
<span class="t" style="left:1690.00px;top:380.20px;font-size:17.5px;line-height:23px;color:#0b62de;font-family:'Liberation Sans',sans-serif;-webkit-text-stroke:0.38px #0b62de;letter-spacing:0.451px;">Open in</span>
<svg class="i" style="left:1755.00px;top:380.00px;color:#0b62de;" width="22" height="22" viewBox="0 0 24 24" fill="#0b62de"><path d="M7 10l5 5 5-5z"/></svg>
<svg class="i" style="left:1812.00px;top:379.00px;color:#0b62de;" width="26" height="26" viewBox="0 0 24 24" fill="#0b62de"><path d="M7.500 9l4.500-4.500L16.500 9M7.500 15l4.500 4.500 4.500-4.500" stroke="currentColor" stroke-width="1.900" fill="none"/></svg>
<div class="b" style="left:694px;top:421px;width:1165px;height:1px;background:#dadce0;"></div>
<span class="t" style="left:719.00px;top:433.50px;font-size:17.5px;line-height:23px;color:#5f6368;font-family:'Liberation Sans',sans-serif;-webkit-text-stroke:0.38px #5f6368;letter-spacing:0.954px;">Job information</span>
<span class="t" style="left:902.00px;top:433.50px;font-size:17.5px;line-height:23px;color:#0b62de;font-family:'Liberation Sans',sans-serif;-webkit-text-stroke:0.38px #0b62de;letter-spacing:0.441px;">Results</span>
<span class="t" style="left:1013.00px;top:433.50px;font-size:17.5px;line-height:23px;color:#5f6368;font-family:'Liberation Sans',sans-serif;-webkit-text-stroke:0.38px #5f6368;letter-spacing:0.589px;">Visualization</span>
<span class="t" style="left:1168.00px;top:433.50px;font-size:17.5px;line-height:23px;color:#5f6368;font-family:'Liberation Sans',sans-serif;-webkit-text-stroke:0.38px #5f6368;letter-spacing:0.443px;">JSON</span>
<span class="t" style="left:1267.00px;top:433.50px;font-size:17.5px;line-height:23px;color:#5f6368;font-family:'Liberation Sans',sans-serif;-webkit-text-stroke:0.38px #5f6368;letter-spacing:0.544px;">Execution details</span>
<span class="t" style="left:1459.00px;top:433.50px;font-size:17.5px;line-height:23px;color:#5f6368;font-family:'Liberation Sans',sans-serif;-webkit-text-stroke:0.38px #5f6368;letter-spacing:0.681px;">Execution graph</span>
<div class="b" style="left:877px;top:464.6px;width:111px;height:2.4px;background:#0b62de;"></div>
<div class="b" style="left:694px;top:466.6px;width:1165px;height:1px;background:#dadce0;"></div>
<div class="b" style="left:695px;top:467.5px;width:1164px;height:31px;background:#f1f3f4;"></div>
<div class="b" style="left:695px;top:531.75px;width:1164px;height:33.85000000000002px;background:#f8f9fa;"></div>
<div class="b" style="left:695px;top:599.45px;width:1164px;height:33.84999999999991px;background:#f8f9fa;"></div>
<div class="b" style="left:695px;top:497.9px;width:1164px;height:1px;background:#dadce0;"></div>
<div class="b" style="left:695px;top:531.75px;width:1164px;height:1px;background:#dadce0;"></div>
<div class="b" style="left:695px;top:565.6px;width:1164px;height:1px;background:#dadce0;"></div>
<div class="b" style="left:695px;top:599.45px;width:1164px;height:1px;background:#dadce0;"></div>
<div class="b" style="left:695px;top:633.3px;width:1164px;height:1px;background:#dadce0;"></div>
<div class="b" style="left:695px;top:667.15px;width:1164px;height:1px;background:#dadce0;"></div>
<div class="b" style="left:769px;top:498.4px;width:1px;height:169.5px;background:#c4c7c5;"></div>
<div class="b" style="left:924px;top:498.4px;width:1px;height:169.5px;background:#c4c7c5;"></div>
<div class="b" style="left:1079px;top:498.4px;width:1px;height:169.5px;background:#c4c7c5;"></div>
<div class="b" style="left:1234px;top:498.4px;width:1px;height:169.5px;background:#c4c7c5;"></div>
<div class="b" style="left:1484px;top:498.4px;width:1px;height:169.5px;background:#c4c7c5;"></div>
<div class="b" style="left:1734px;top:498.4px;width:1px;height:169.5px;background:#c4c7c5;"></div>
<div class="b" style="left:694px;top:498px;width:1px;height:170px;background:#c4c7c5;"></div>
<span class="t" style="left:707.00px;top:474.08px;font-size:15.5px;line-height:20px;color:#5f6368;font-family:'Liberation Sans',sans-serif;letter-spacing:-1.254px;">Row</span>
<span class="t" style="left:782.00px;top:474.08px;font-size:15.5px;line-height:20px;color:#5f6368;font-family:'Liberation Sans',sans-serif;letter-spacing:-0.554px;">sale_id</span>
<svg class="i" style="left:832.50px;top:472.70px;color:#1f1f1f;" width="21" height="21" viewBox="0 0 24 24" fill="#1f1f1f"><path d="M7 10l5 5 5-5z"/></svg>
<span class="t" style="left:937.00px;top:474.08px;font-size:15.5px;line-height:20px;color:#5f6368;font-family:'Liberation Sans',sans-serif;letter-spacing:-0.553px;">sale_date</span>
<svg class="i" style="left:1004.50px;top:472.70px;color:#1f1f1f;" width="21" height="21" viewBox="0 0 24 24" fill="#1f1f1f"><path d="M7 10l5 5 5-5z"/></svg>
<span class="t" style="left:1092.00px;top:474.08px;font-size:15.5px;line-height:20px;color:#5f6368;font-family:'Liberation Sans',sans-serif;letter-spacing:-0.181px;">amount</span>
<svg class="i" style="left:1147.50px;top:472.70px;color:#1f1f1f;" width="21" height="21" viewBox="0 0 24 24" fill="#1f1f1f"><path d="M7 10l5 5 5-5z"/></svg>
<span class="t" style="left:1247.00px;top:474.08px;font-size:15.5px;line-height:20px;color:#5f6368;font-family:'Liberation Sans',sans-serif;letter-spacing:-0.278px;">customer_name</span>
<svg class="i" style="left:1359.50px;top:472.70px;color:#1f1f1f;" width="21" height="21" viewBox="0 0 24 24" fill="#1f1f1f"><path d="M7 10l5 5 5-5z"/></svg>
<span class="t" style="left:1497.00px;top:474.08px;font-size:15.5px;line-height:20px;color:#5f6368;font-family:'Liberation Sans',sans-serif;letter-spacing:0.183px;">city</span>
<svg class="i" style="left:1525.50px;top:472.70px;color:#1f1f1f;" width="21" height="21" viewBox="0 0 24 24" fill="#1f1f1f"><path d="M7 10l5 5 5-5z"/></svg>
<svg class="i" style="left:756px;top:486px" width="12" height="12" viewBox="0 0 12 12"><path d="M2 11L11 2M7 11l4-4" stroke="#5f6368" stroke-width="1.100" fill="none"/></svg>
<svg class="i" style="left:911px;top:486px" width="12" height="12" viewBox="0 0 12 12"><path d="M2 11L11 2M7 11l4-4" stroke="#5f6368" stroke-width="1.100" fill="none"/></svg>
<svg class="i" style="left:1066px;top:486px" width="12" height="12" viewBox="0 0 12 12"><path d="M2 11L11 2M7 11l4-4" stroke="#5f6368" stroke-width="1.100" fill="none"/></svg>
<svg class="i" style="left:1221px;top:486px" width="12" height="12" viewBox="0 0 12 12"><path d="M2 11L11 2M7 11l4-4" stroke="#5f6368" stroke-width="1.100" fill="none"/></svg>
<svg class="i" style="left:1471px;top:486px" width="12" height="12" viewBox="0 0 12 12"><path d="M2 11L11 2M7 11l4-4" stroke="#5f6368" stroke-width="1.100" fill="none"/></svg>
<svg class="i" style="left:1721px;top:486px" width="12" height="12" viewBox="0 0 12 12"><path d="M2 11L11 2M7 11l4-4" stroke="#5f6368" stroke-width="1.100" fill="none"/></svg>
<span class="t" style="right:1162.00px;top:506.77px;font-size:14.8px;line-height:19px;color:#1f1f1f;font-family:'Liberation Sans',sans-serif;">1</span>
<span class="t" style="right:1006.50px;top:506.77px;font-size:14.8px;line-height:19px;color:#1f1f1f;font-family:'Liberation Sans',sans-serif;">101</span>
<span class="t" style="left:936.50px;top:506.77px;font-size:14.8px;line-height:19px;color:#1f1f1f;font-family:'Liberation Sans',sans-serif;">2025-01-01</span>
<span class="t" style="right:696.50px;top:506.77px;font-size:14.8px;line-height:19px;color:#1f1f1f;font-family:'Liberation Sans',sans-serif;">5000</span>
<span class="t" style="left:1246.50px;top:506.77px;font-size:14.8px;line-height:19px;color:#1f1f1f;font-family:'Liberation Sans',sans-serif;">Rahul</span>
<span class="t" style="left:1496.50px;top:506.77px;font-size:14.8px;line-height:19px;color:#1f1f1f;font-family:'Liberation Sans',sans-serif;">Delhi</span>
<span class="t" style="right:1162.00px;top:540.62px;font-size:14.8px;line-height:19px;color:#1f1f1f;font-family:'Liberation Sans',sans-serif;">2</span>
<span class="t" style="right:1006.50px;top:540.62px;font-size:14.8px;line-height:19px;color:#1f1f1f;font-family:'Liberation Sans',sans-serif;">104</span>
<span class="t" style="left:936.50px;top:540.62px;font-size:14.8px;line-height:19px;color:#1f1f1f;font-family:'Liberation Sans',sans-serif;">2025-01-04</span>
<span class="t" style="right:696.50px;top:540.62px;font-size:14.8px;line-height:19px;color:#1f1f1f;font-family:'Liberation Sans',sans-serif;">8000</span>
<span class="t" style="left:1246.50px;top:540.62px;font-size:14.8px;line-height:19px;color:#1f1f1f;font-family:'Liberation Sans',sans-serif;">Rahul</span>
<span class="t" style="left:1496.50px;top:540.62px;font-size:14.8px;line-height:19px;color:#1f1f1f;font-family:'Liberation Sans',sans-serif;">Delhi</span>
<span class="t" style="right:1162.00px;top:574.47px;font-size:14.8px;line-height:19px;color:#1f1f1f;font-family:'Liberation Sans',sans-serif;">3</span>
<span class="t" style="right:1006.50px;top:574.47px;font-size:14.8px;line-height:19px;color:#1f1f1f;font-family:'Liberation Sans',sans-serif;">102</span>
<span class="t" style="left:936.50px;top:574.47px;font-size:14.8px;line-height:19px;color:#1f1f1f;font-family:'Liberation Sans',sans-serif;">2025-01-02</span>
<span class="t" style="right:696.50px;top:574.47px;font-size:14.8px;line-height:19px;color:#1f1f1f;font-family:'Liberation Sans',sans-serif;">7000</span>
<span class="t" style="left:1246.50px;top:574.47px;font-size:14.8px;line-height:19px;color:#1f1f1f;font-family:'Liberation Sans',sans-serif;">Anita</span>
<span class="t" style="left:1496.50px;top:574.47px;font-size:14.8px;line-height:19px;color:#1f1f1f;font-family:'Liberation Sans',sans-serif;">Mumbai</span>
<span class="t" style="right:1162.00px;top:608.32px;font-size:14.8px;line-height:19px;color:#1f1f1f;font-family:'Liberation Sans',sans-serif;">4</span>
<span class="t" style="right:1006.50px;top:608.32px;font-size:14.8px;line-height:19px;color:#1f1f1f;font-family:'Liberation Sans',sans-serif;">103</span>
<span class="t" style="left:936.50px;top:608.32px;font-size:14.8px;line-height:19px;color:#1f1f1f;font-family:'Liberation Sans',sans-serif;">2025-01-03</span>
<span class="t" style="right:696.50px;top:608.32px;font-size:14.8px;line-height:19px;color:#1f1f1f;font-family:'Liberation Sans',sans-serif;">6000</span>
<span class="t" style="left:1246.50px;top:608.32px;font-size:14.8px;line-height:19px;color:#bdc1c6;font-family:'Liberation Sans',sans-serif;font-style:italic;">null</span>
<span class="t" style="left:1496.50px;top:608.32px;font-size:14.8px;line-height:19px;color:#bdc1c6;font-family:'Liberation Sans',sans-serif;font-style:italic;">null</span>
<span class="t" style="right:1162.00px;top:642.17px;font-size:14.8px;line-height:19px;color:#1f1f1f;font-family:'Liberation Sans',sans-serif;">5</span>
<span class="t" style="right:1006.50px;top:642.17px;font-size:14.8px;line-height:19px;color:#bdc1c6;font-family:'Liberation Sans',sans-serif;font-style:italic;">null</span>
<span class="t" style="left:936.50px;top:642.17px;font-size:14.8px;line-height:19px;color:#bdc1c6;font-family:'Liberation Sans',sans-serif;font-style:italic;">null</span>
<span class="t" style="right:696.50px;top:642.17px;font-size:14.8px;line-height:19px;color:#bdc1c6;font-family:'Liberation Sans',sans-serif;font-style:italic;">null</span>
<span class="t" style="left:1246.50px;top:642.17px;font-size:14.8px;line-height:19px;color:#1f1f1f;font-family:'Liberation Sans',sans-serif;">Vikram</span>
<span class="t" style="left:1496.50px;top:642.17px;font-size:14.8px;line-height:19px;color:#1f1f1f;font-family:'Liberation Sans',sans-serif;">Bangalore</span>
<div class="b" style="left:695px;top:763.3px;width:878px;height:11.6px;background:#c6c6c6;"></div>
<div class="b" style="left:694px;top:775.8px;width:1165px;height:1px;background:#e8eaed;"></div>
<span class="t" style="left:1304.00px;top:786.00px;font-size:17.5px;line-height:23px;color:#5f6368;font-family:'Liberation Sans',sans-serif;letter-spacing:-0.198px;">Results per page:</span>
<span class="t" style="left:1476.00px;top:786.00px;font-size:17.5px;line-height:23px;color:#1f1f1f;font-family:'Liberation Sans',sans-serif;letter-spacing:-0.465px;">50</span>
<svg class="i" style="left:1491.00px;top:781.00px;color:#1f1f1f;" width="31" height="31" viewBox="0 0 24 24" fill="#1f1f1f"><path d="M7 10l5 5 5-5z"/></svg>
<span class="t" style="left:1553.00px;top:786.00px;font-size:17.5px;line-height:23px;color:#5f6368;font-family:'Liberation Sans',sans-serif;letter-spacing:0.226px;">1 – 5 of 5</span>
<svg class="i" style="left:1658.10px;top:783.20px;color:#9aa0a6;" width="29" height="29" viewBox="0 0 24 24" fill="#9aa0a6"><path d="M18.41 16.59L13.82 12l4.59-4.59L17 6l-6 6 6 6zM6 6h2v12H6z"/></svg>
<svg class="i" style="left:1707.80px;top:783.20px;color:#9aa0a6;" width="29" height="29" viewBox="0 0 24 24" fill="#9aa0a6"><path d="M15.41 7.41L14 6l-6 6 6 6 1.41-1.41L10.83 12z"/></svg>
<svg class="i" style="left:1758.20px;top:783.20px;color:#9aa0a6;" width="29" height="29" viewBox="0 0 24 24" fill="#9aa0a6"><path d="M10 6L8.59 7.41 13.17 12l-4.58 4.59L10 18l6-6z"/></svg>
<svg class="i" style="left:1808.90px;top:783.20px;color:#9aa0a6;" width="29" height="29" viewBox="0 0 24 24" fill="#9aa0a6"><path d="M5.59 7.41L10.18 12l-4.59 4.59L7 18l6-6-6-6zM16 6h2v12h-2z"/></svg>
<div class="b" style="left:694px;top:817px;width:1224px;height:1px;background:#dadce0;"></div>
<div class="b" style="left:694px;top:818px;width:1224px;height:48px;background:#fff;"></div>
<span class="t" style="left:724.00px;top:824.05px;font-size:22px;line-height:29px;color:#1f1f1f;font-family:'Liberation Sans',sans-serif;letter-spacing:0.561px;">Job history</span>
<span class="t" style="left:1820.00px;top:827.20px;font-size:17.5px;line-height:23px;color:#0b62de;font-family:'Liberation Sans',sans-serif;-webkit-text-stroke:0.38px #0b62de;letter-spacing:0.408px;">Show</span>
<div class="b" style="left:1859.5px;top:122px;width:58.5px;height:695px;background:#fff;"></div>
<div class="b" style="left:1857.5px;top:122px;width:2px;height:695px;background:#dfe1e6;"></div>
<svg class="i" style="left:1879.00px;top:143.00px;color:#5f6368;" width="22" height="22" viewBox="0 0 24 24" fill="#5f6368"><path d="M10 20H5V3h8l5 5v4" stroke="currentColor" stroke-width="2" fill="none"/><path d="M13 3v5h5" stroke="currentColor" stroke-width="1.800" fill="none"/><rect x="7.500" y="13" width="4" height="1.700"/><rect x="7.500" y="16.300" width="3" height="1.700"/><circle cx="16.500" cy="16.500" r="3" fill="none" stroke="currentColor" stroke-width="1.800"/><path d="M18.700 18.700L22 22" stroke="currentColor" stroke-width="2"/></svg>
<svg class="i" style="left:1879.50px;top:193.50px;color:#5f6368;" width="21" height="21" viewBox="0 0 24 24" fill="#5f6368"><path d="M11 7h2v2h-2zm0 4h2v6h-2zm1-9C6.48 2 2 6.48 2 12s4.48 10 10 10 10-4.48 10-10S17.52 2 12 2zm0 18c-4.41 0-8-3.59-8-8s3.59-8 8-8 8 3.59 8 8-3.59 8-8 8z"/></svg>
<svg class="i" style="left:1878.50px;top:242.50px;color:#5f6368;" width="23" height="23" viewBox="0 0 24 24" fill="#5f6368"><path d="M5.450 7.070A8.200 8.200 0 1 1 3.860 11" stroke="currentColor" stroke-width="2.200" fill="none"/><path d="M3.200 3.300v5.600h5.600" stroke="currentColor" stroke-width="2.200" fill="none"/><path d="M12 7.300v5l3.600 2.300" stroke="currentColor" stroke-width="2.200" fill="none"/></svg>
<svg class="i" style="left:1879.50px;top:292.50px;color:#5f6368;" width="21" height="21" viewBox="0 0 24 24" fill="#5f6368"><path d="M4 4h16v12H5.17L4 17.17V4m0-2c-1.1 0-1.99.9-1.99 2L2 22l4-4h14c1.1 0 2-.9 2-2V4c0-1.1-.9-2-2-2H4zm2 10h8v2H6v-2zm0-3h12v2H6V9zm0-3h12v2H6V6z"/></svg>
</body></html>
